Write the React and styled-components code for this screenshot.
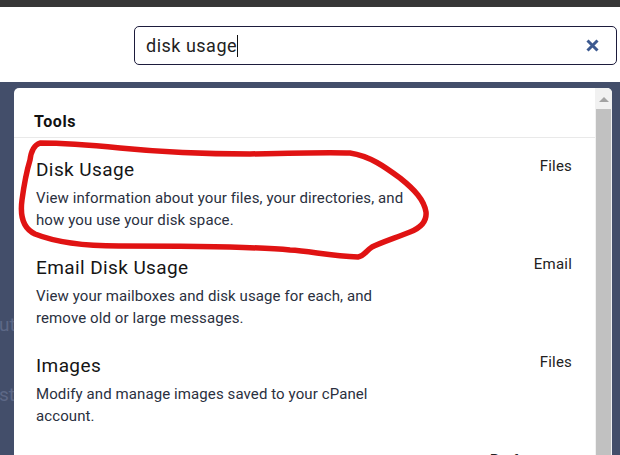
import React from 'react'
import styled, { createGlobalStyle } from 'styled-components'

const Global = createGlobalStyle`
    html, body {
        margin: 0;
        padding: 0;
        overflow: hidden;
    }
    body {
        font-family: Roboto, "Liberation Sans", Arial, sans-serif;
        background: #fff;
    }
`

const Page = styled.div`
    position: relative;
    height: 455px;
    display: flex;
    flex-direction: column;
    overflow: hidden;
`

const TopBar = styled.div`
    height: 7px;
    background: #373737;
    flex-shrink: 0;
`

const Header = styled.header`
    height: 75px;
    flex-shrink: 0;
    box-sizing: border-box;
    padding: 19px 3px 0 0;
    display: flex;
    justify-content: flex-end;
    background: #fff;
`

const SearchBox = styled.div`
    width: 483px;
    height: 39px;
    box-sizing: border-box;
    border: 1px solid #1d1c3c;
    border-radius: 5px;
    display: flex;
    align-items: center;
    padding: 0 17px 0 11px;
`

const SearchText = styled.span`
    flex: 1;
    font-size: 18px;
    letter-spacing: 0.5px;
    color: #222;
    display: flex;
    align-items: center;
`

const Caret = styled.span`
    display: inline-block;
    width: 1px;
    height: 22px;
    background: #111;
`

const Backdrop = styled.div`
    flex: 1;
    display: flex;
    padding-top: 6px;
    background: #434e6a;
    min-height: 0;
`

const Gutter = styled.div`
    width: ${p => p.$w}px;
    flex-shrink: 0;
    overflow: hidden;
    margin-top: -6px;
`

const GhostLine = styled.div`
    margin-top: ${p => p.$top}px;
    margin-left: -1px;
    height: 24px;
    line-height: 24px;
    font-size: 19px;
    color: #5d6886;
    white-space: nowrap;
`

const Panel = styled.div`
    flex: 1;
    display: flex;
    background: #fff;
    border-radius: 5px 5px 0 0;
    overflow: hidden;
`

const Results = styled.div`
    flex: 1;
`

const GroupTitle = styled.div`
    padding: 24px 20px 5px;
    line-height: 20px;
    font-size: 16px;
    letter-spacing: 0.6px;
    font-weight: 700;
    color: #111;
    border-bottom: 1px solid #e9e9e9;
`

const Item = styled.div`
    display: flex;
    padding: 20px 23px 5px 22px;
`

const ItemBody = styled.div`
    flex: 1;
`

const ItemName = styled.div`
    font-size: 19px;
    letter-spacing: 0.4px;
    line-height: 24px;
    color: #151515;
`

const ItemDesc = styled.div`
    width: 385px;
    font-size: 15px;
    letter-spacing: 0.1px;
    line-height: 22px;
    color: #2a3040;
    margin-top: 5px;
`

const Category = styled.div`
    font-size: 15px;
    letter-spacing: 0.2px;
    line-height: 18px;
    color: #222;
    margin-top: -1px;
`

const Scrollbar = styled.div`
    width: 17px;
    flex-shrink: 0;
    background: #f1f1f1;
    display: flex;
    flex-direction: column;
    align-items: center;
`

const ArrowUp = styled.div`
    margin-top: 9px;
    width: 0;
    height: 0;
    border-left: 5px solid transparent;
    border-right: 5px solid transparent;
    border-bottom: 5px solid #a3a3a3;
`

const Thumb = styled.div`
    margin-top: 7px;
    width: 15px;
    flex: 1;
    background: #c1c1c1;
`

const Scribble = styled.svg`
    position: absolute;
    left: 0;
    top: 0;
    pointer-events: none;
`

const items = [
    { name: 'Disk Usage', cat: 'Files', desc: 'View information about your files, your directories, and how you use your disk space.' },
    { name: 'Email Disk Usage', cat: 'Email', desc: 'View your mailboxes and disk usage for each, and remove old or large messages.' },
    { name: 'Images', cat: 'Files', desc: 'Modify and manage images saved to your cPanel account.' },
    { name: 'Change Language', cat: 'Preferences', desc: 'Change the language of your cPanel interface.' },
]

const App = () => {
  return (
    <Page>
        <Global />
        <TopBar />
        <Header>
            <SearchBox>
                <SearchText>disk usage<Caret /></SearchText>
                <svg width="13" height="13" viewBox="0 0 13 13">
                    <path d="M1.5 1.5 L11.5 11.5 M11.5 1.5 L1.5 11.5" stroke="#3d5a90" strokeWidth="3" />
                </svg>
            </SearchBox>
        </Header>

        <Backdrop>
            <Gutter $w={14}>
                <GhostLine $top={231}>uti</GhostLine>
                <GhostLine $top={46}>st</GhostLine>
            </Gutter>
            <Panel>
                <Results>
                    <GroupTitle>Tools</GroupTitle>
                    {items.map(it => (
                        <Item key={it.name}>
                            <ItemBody>
                                <ItemName>{it.name}</ItemName>
                                <ItemDesc>{it.desc}</ItemDesc>
                            </ItemBody>
                            <Category>{it.cat}</Category>
                        </Item>
                    ))}
                </Results>
                <Scrollbar>
                    <ArrowUp />
                    <Thumb />
                </Scrollbar>
            </Panel>
            <Gutter $w={8} />
        </Backdrop>

        {/* hand-drawn red circle around the first result */}
        <Scribble width="620" height="455" viewBox="0 0 620 455">
            <path
                d="M30 160 C31 152 34 145 40 143 C60 143 90 145 120 148 C160 152 200 154 250 154 C290 153 330 152 350 153 C370 156 385 167 400 178 C415 190 424 200 426 212 C427 222 420 228 410 232 C395 238 380 243 372 247 C366 251 364 256 358 257 C330 256 310 251 290 250 C250 246 180 246 119 246 C80 246 55 242 35 234 C22 228 20 215 22 200 C24 185 27 170 30 160"
                fill="none"
                stroke="#e01313"
                strokeWidth="5.5"
                strokeLinecap="round"
                strokeLinejoin="round"
            />
        </Scribble>
    </Page>
  )
}

export default App
